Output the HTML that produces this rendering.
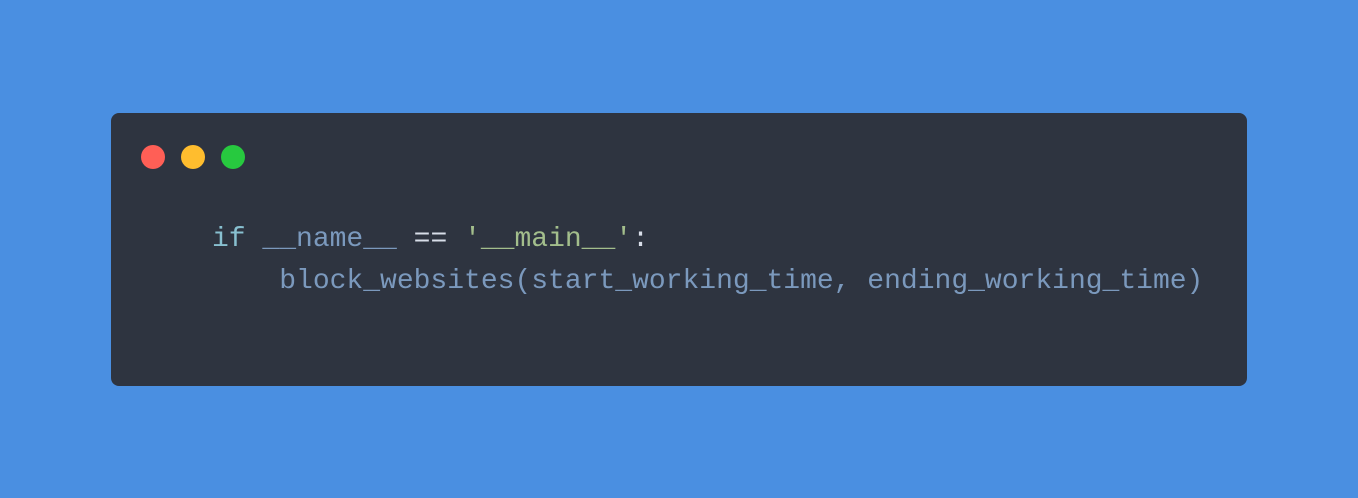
<!DOCTYPE html>
<html><head><style>
html,body{margin:0;padding:0;}
body{width:1358px;height:498px;background:#4a8fe1;position:relative;overflow:hidden;}
.card{position:absolute;left:111px;top:113px;width:1136px;height:273px;background:#2e3440;border-radius:8px;}
.dot{position:absolute;top:32px;width:24px;height:24px;border-radius:50%;}
pre{position:absolute;left:101px;top:106px;margin:0;font-family:"Liberation Mono",monospace;font-size:28px;line-height:42px;color:#7b99bd;}
.k{color:#88c0d0}.s{color:#a3be8c}.p{color:#d8dee9}
</style></head><body>
<div class="card">
<div class="dot" style="left:30px;background:#ff5f56"></div>
<div class="dot" style="left:70px;background:#ffbd2e"></div>
<div class="dot" style="left:110px;background:#27c93f"></div>
<pre><span class="k">if</span> __name__ <span class="p">==</span> <span class="s">'__main__'</span><span class="p">:</span>
    block_websites(start_working_time, ending_working_time)</pre>
</div>
</body></html>
